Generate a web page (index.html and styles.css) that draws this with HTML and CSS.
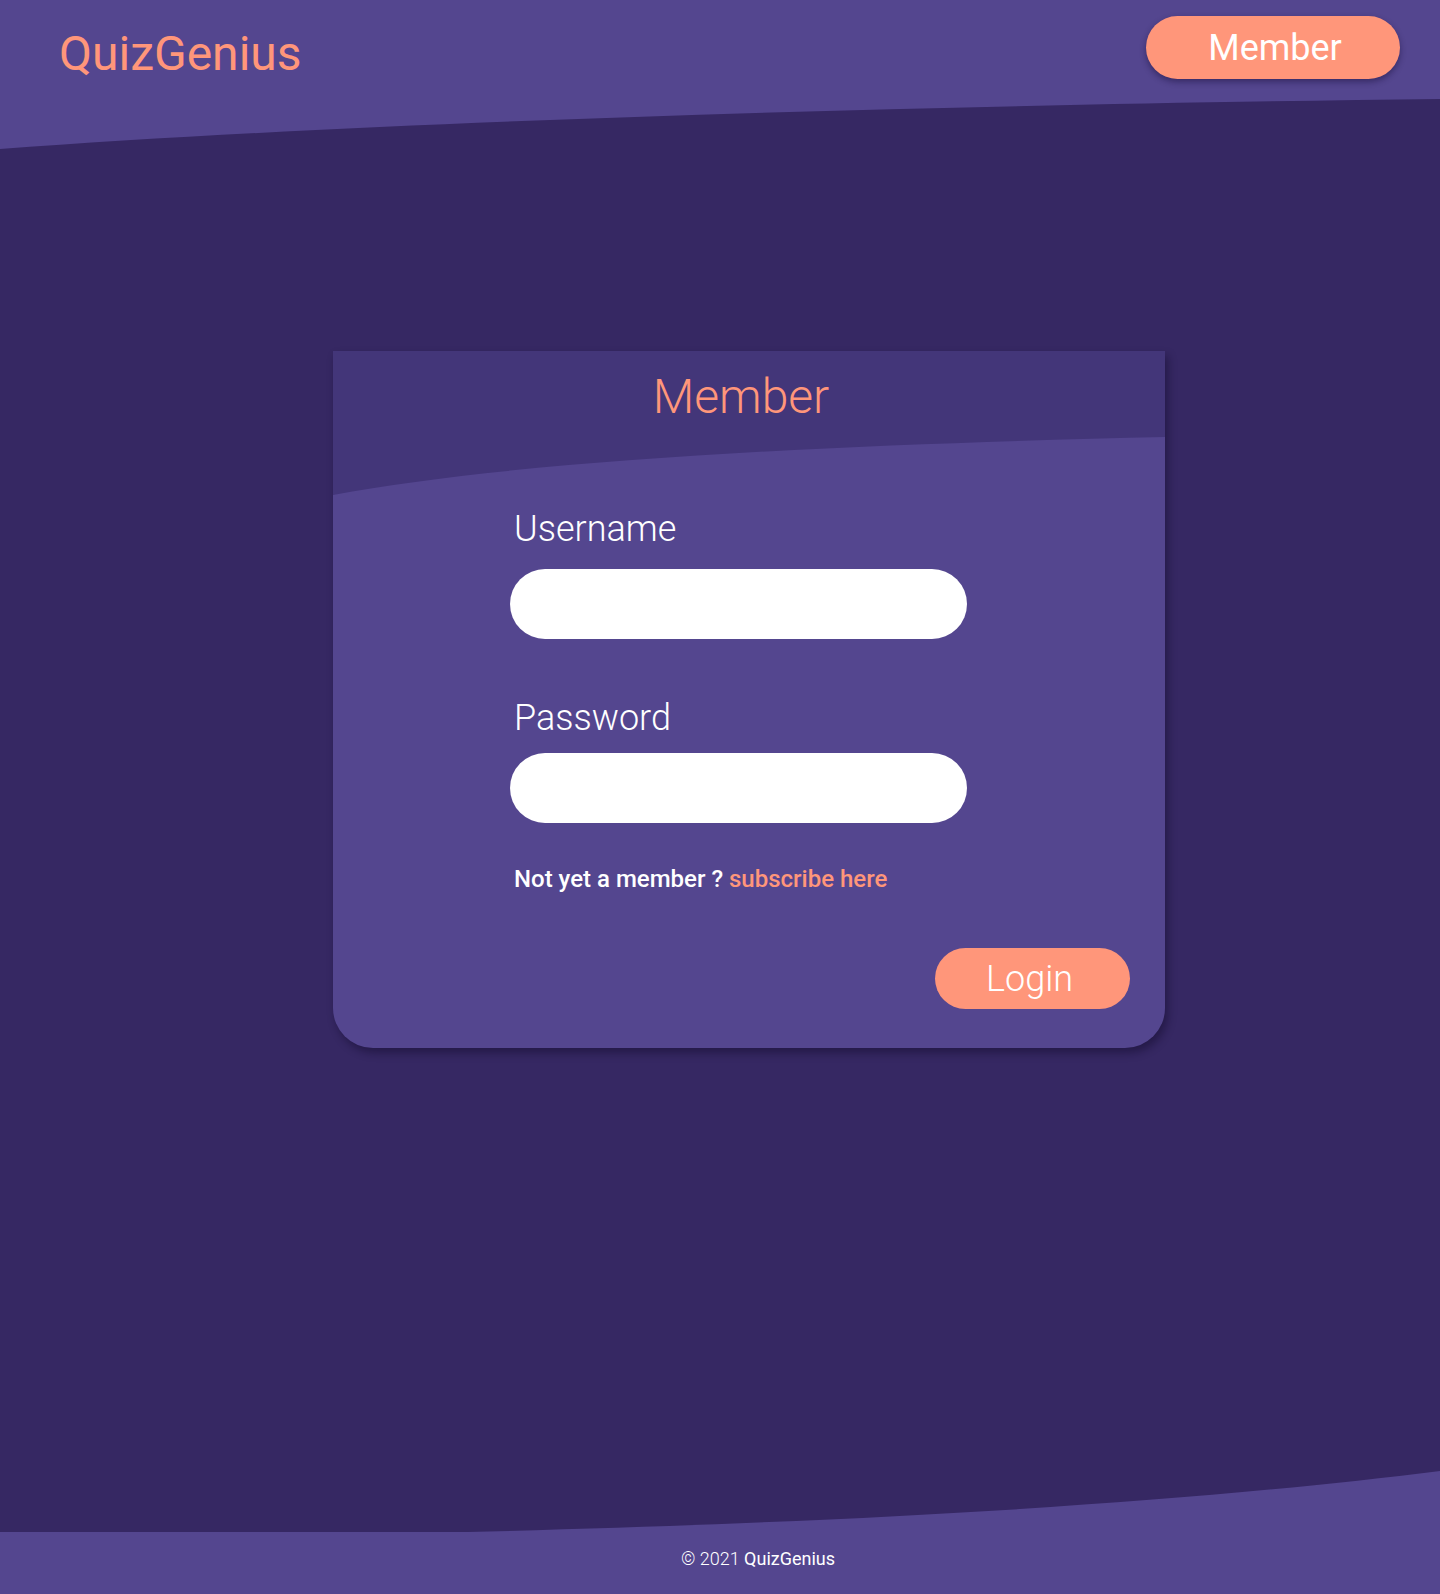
FILE: index.html
```html
<!DOCTYPE html>
<html lang="en">
<head>
<meta charset="utf-8">
<title>QuizGenius - Member</title>
<link rel="stylesheet" href="styles.css">
</head>
<body>
<header class="site-header">
  <div class="topbar">
    <div class="logo">QuizGenius</div>
    <button class="member-btn">Member</button>
  </div>
  <svg class="wave wave-top" viewBox="0 0 1440 50" preserveAspectRatio="none" aria-hidden="true">
    <path d="M0 0 H1440 V0 C1000 5 400 20 0 50 Z" fill="#54468f"/>
  </svg>
</header>

<main class="main">
  <section class="card">
    <div class="card-head">
      <h1 class="card-title">Member</h1>
    </div>
    <svg class="wave card-wave" viewBox="0 0 832 58" preserveAspectRatio="none" aria-hidden="true">
      <path d="M0 0 H832 V0 C560 6 200 20 0 58 Z" fill="#433679"/>
    </svg>
    <form class="card-body">
      <label class="field-label label-user" for="user">Username</label>
      <input class="field" id="user" type="text">
      <label class="field-label label-pass" for="pass">Password</label>
      <input class="field" id="pass" type="password">
      <p class="signup">Not yet a member ? <a class="signup-link" href="#">subscribe here</a></p>
      <div class="actions">
        <button class="login-btn" type="button">Login</button>
      </div>
    </form>
  </section>
</main>

<footer class="site-footer">
  <svg class="wave wave-bottom" viewBox="0 0 1440 61" preserveAspectRatio="none" aria-hidden="true">
    <path d="M0 61 H468 C900 50 1200 30 1440 0 V61 Z" fill="#54468f"/>
  </svg>
  <div class="footer-band">
    <p class="copy"><span class="copy-light">© 2021</span> QuizGenius</p>
  </div>
</footer>
</body>
</html>
```

FILE: styles.css
```css
* { box-sizing: border-box; }

html, body { margin: 0; padding: 0; }

body {
  background: #362863;
  font-family: Roboto, "Liberation Sans", sans-serif;
  min-height: 100vh;
  display: flex;
  flex-direction: column;
}

.wave { display: block; width: 100%; }

/* Header */
.topbar {
  background: #54468f;
  height: 99px;
  display: flex;
  justify-content: space-between;
  align-items: flex-start;
  padding: 16px 40px 0 59px;
}

.logo {
  color: #ff967a;
  font-size: 48px;
  line-height: 56px;
  font-weight: 400;
  margin-top: 10px;
}

.member-btn {
  width: 254px;
  height: 63px;
  border: none;
  border-radius: 32px;
  background: #ff967a;
  color: #ffffff;
  font-family: Roboto, "Liberation Sans", sans-serif;
  font-size: 36px;
  font-weight: 400;
  padding: 0 0 0 4px;
  box-shadow: 0 3px 6px rgba(20, 10, 50, 0.45);
  cursor: pointer;
}

.wave-top { height: 50px; }

/* Main */
.main { flex: 1; }

.card {
  margin: 202px 0 0 333px;
  width: 832px;
  background: #54468f;
  border-radius: 0 0 40px 40px;
  box-shadow: 3px 5px 8px rgba(15, 8, 40, 0.45);
}

.card-head {
  background: #433679;
  height: 86px;
  padding-top: 18px;
  text-align: center;
}

.card-title {
  margin: 0;
  padding-right: 16px;
  color: #ff967a;
  font-size: 48px;
  line-height: 56px;
  font-weight: 300;
}

.card-wave { height: 58px; }

.card-body {
  display: flex;
  flex-direction: column;
  align-items: flex-start;
  padding: 14px 35px 39px 177px;
}

.field-label {
  color: #ffffff;
  font-size: 36px;
  line-height: 40px;
  font-weight: 300;
  padding-left: 4px;
}

.label-pass { margin-top: 59px; }

.field {
  width: 457px;
  height: 70px;
  border: none;
  border-radius: 35px;
  background: #ffffff;
  margin-top: 20px;
  outline: none;
  padding: 0 28px;
  font-size: 24px;
}

.label-pass + .field { margin-top: 15px; }

.signup {
  margin: 42px 0 0;
  padding-left: 4px;
  color: #ffffff;
  font-size: 24px;
  line-height: 28px;
  font-weight: 500;
}

.signup-link {
  color: #ff967a;
  text-decoration: none;
}

.actions {
  align-self: stretch;
  display: flex;
  justify-content: flex-end;
  margin-top: 55px;
}

.login-btn {
  width: 195px;
  height: 61px;
  border: none;
  border-radius: 31px;
  background: #ff967a;
  color: #ffffff;
  font-family: Roboto, "Liberation Sans", sans-serif;
  font-size: 36px;
  font-weight: 300;
  padding: 0 6px 0 0;
  cursor: pointer;
}

/* Footer */
.wave-bottom { height: 61px; }

.footer-band {
  background: #54468f;
  height: 62px;
  padding: 16px 0 0 76px;
  text-align: center;
}

.copy {
  margin: 0;
  color: #ffffff;
  font-size: 18px;
  line-height: 21px;
  font-weight: 400;
}

.copy-light { font-weight: 300; }
```
